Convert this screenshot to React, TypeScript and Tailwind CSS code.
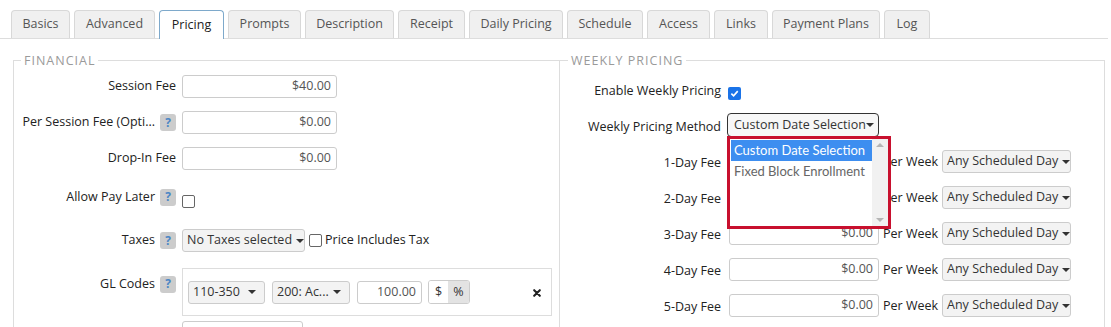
import React from 'react';

const tabs = [
  { name: 'Basics', w: 'w-[59px]' },
  { name: 'Advanced', w: 'w-[81px]' },
  { name: 'Pricing', w: 'w-[65px]', active: true },
  { name: 'Prompts', w: 'w-[73px]' },
  { name: 'Description', w: 'w-[89px]' },
  { name: 'Receipt', w: 'w-[67px]' },
  { name: 'Daily Pricing', w: 'w-[94px]' },
  { name: 'Schedule', w: 'w-[76px]' },
  { name: 'Access', w: 'w-[63px]' },
  { name: 'Links', w: 'w-[54px]' },
  { name: 'Payment Plans', w: 'w-[108px]' },
  { name: 'Log', w: 'w-[46px]' },
];

function Caret() {
  return (
    <span className="inline-block shrink-0 w-0 h-0 border-x-[4px] border-x-transparent border-t-[4px] border-t-[#333]" />
  );
}

function Help() {
  return (
    <span className="inline-flex items-center justify-center w-[16px] h-[17px] rounded-[3px] bg-[#cccccc] text-[#4a86c5] text-[12px] font-bold leading-none ml-[5px]">
      ?
    </span>
  );
}

function MoneyInput({ value, w = 'w-[155px]' }: { value?: string; w?: string }) {
  return (
    <div
      className={`${w} h-[23px] border border-[#cccccc] rounded-[3px] bg-white flex items-center justify-end pr-[5px] text-[#555] text-[12.5px]`}
    >
      {value}
    </div>
  );
}

function SelectBtn({ text, w, pr = 'pr-[4px]' }: { text: string; w: string; pr?: string }) {
  return (
    <div
      className={`${w} ${pr} h-[23px] border border-[#cccccc] rounded-[3px] bg-[#f3f3f3] flex items-center justify-between gap-[4px] pl-[4px] text-[#333] text-[12.5px] whitespace-nowrap overflow-hidden`}
    >
      <span>{text}</span>
      <Caret />
    </div>
  );
}

function Checkbox() {
  return <span className="inline-block w-[13px] h-[13px] border border-[#666] rounded-[2px] bg-white" />;
}

function LeftRow({
  label,
  help,
  children,
  className = '',
}: {
  label: string;
  help?: boolean;
  children: React.ReactNode;
  className?: string;
}) {
  return (
    <div className={`flex ${className}`}>
      <div className="w-[162px] flex items-center justify-end text-[#222] text-[12.5px] whitespace-nowrap">
        {label}
        {help && <Help />}
      </div>
      <div className="ml-[6px] flex items-center">{children}</div>
    </div>
  );
}

function FeeRow({ day, hidden }: { day: number; hidden?: boolean }) {
  return (
    <div className="flex items-center h-[23px]">
      <div className="w-[161px] text-right text-[#222] text-[12.5px] pt-[3px]">{day}-Day Fee</div>
      <div className="ml-[8px]">
        <MoneyInput value={hidden ? undefined : '$0.00'} w="w-[150px]" />
      </div>
      <span className="ml-[4px] text-[#222] text-[12.5px] pt-[2px] whitespace-nowrap">Per Week</span>
      <div className="ml-[4px]">
        <SelectBtn text="Any Scheduled Day" w="w-[129px]" />
      </div>
    </div>
  );
}

export default function App() {
  return (
    <div className="w-[1111px] h-[327px] overflow-hidden bg-white font-['Open_Sans',sans-serif]">
      {/* Tabs */}
      <div className="w-[1108px] h-[39px] pt-[10px] pl-[11px] flex gap-[4px] border-b border-[#dddddd]">
        {tabs.map((t) => (
          <div
            key={t.name}
            className={`${t.w} flex items-center justify-center rounded-t-[4px] border border-b-0 text-[12.5px] ${
              t.active
                ? 'h-[29px] bg-white border-[#7ea9cb] text-[#222]'
                : 'h-[28px] bg-[#f0f0f0] border-[#d8d8d8] text-[#555]'
            }`}
          >
            {t.name}
          </div>
        ))}
      </div>

      <div className="flex pl-[13px] mt-[15px]">
        {/* Financial */}
        <fieldset className="w-[547px] h-[300px] border-l border-t border-r border-[#dddddd]">
          <legend className="ml-[7px] px-[3px] text-[12.5px] leading-[13px] tracking-[1px] text-[#9a9a9a]">
            FINANCIAL
          </legend>
          <div className="pt-[8px] flex flex-col">
            <LeftRow label="Session Fee">
              <MoneyInput value="$40.00" />
            </LeftRow>
            <LeftRow label="Per Session Fee (Opti..." help className="mt-[13px]">
              <MoneyInput value="$0.00" />
            </LeftRow>
            <LeftRow label="Drop-In Fee" className="mt-[13px]">
              <MoneyInput value="$0.00" />
            </LeftRow>
            <LeftRow label="Allow Pay Later" help className="mt-[18px] h-[18px]">
              <span className="mt-[9px]">
                <Checkbox />
              </span>
            </LeftRow>
            <LeftRow label="Taxes" help className="mt-[22px]">
              <SelectBtn text="No Taxes selected" w="w-[123px]" pr="pr-[6px]" />
              <span className="ml-[4px] mt-[1px]">
                <Checkbox />
              </span>
              <span className="ml-[3px] text-[#222] text-[12.5px]">Price Includes Tax</span>
            </LeftRow>
            <div className="flex mt-[15px]">
              <div className="w-[162px] flex justify-end pt-[5px] text-[#222] text-[12.5px] h-[22px] items-center box-content">
                GL Codes
                <Help />
              </div>
              <div className="ml-[6px] w-[370px] h-[48px] border border-[#dddddd] flex items-center pl-[5px] pr-[10px]">
                <SelectBtn text="110-350" w="w-[77px]" pr="pr-[8px]" />
                <div className="ml-[7px]">
                  <SelectBtn text="200: Ac..." w="w-[78px]" pr="pr-[8px]" />
                </div>
                <div className="ml-[7px]">
                  <MoneyInput value="100.00" w="w-[65px]" />
                </div>
                <div className="ml-[6px] flex h-[24px] border border-[#cccccc] rounded-[3px] overflow-hidden text-[12.5px] text-[#333]">
                  <span className="w-[19px] flex items-center justify-center bg-white">$</span>
                  <span className="w-[21px] flex items-center justify-center bg-[#e3e3e3]">%</span>
                </div>
                <svg className="ml-auto mt-[2px]" width="8" height="8" viewBox="0 0 10 10">
                  <path d="M1.5 1.5 L8.5 8.5 M8.5 1.5 L1.5 8.5" stroke="#222" strokeWidth="2.6" strokeLinecap="round" />
                </svg>
              </div>
            </div>
            <div className="ml-[168px] mt-[5px] w-[121px] h-[23px] border border-[#cccccc] rounded-[3px]" />
          </div>
        </fieldset>

        {/* Weekly pricing */}
        <fieldset className="w-[545px] h-[300px] border-t border-r border-[#dddddd]">
          <legend className="ml-[8px] px-[3px] text-[12.5px] leading-[13px] tracking-[1px] text-[#9a9a9a]">
            WEEKLY PRICING
          </legend>
          <div className="pt-[15px] flex flex-col">
            <div className="flex items-center h-[18px]">
              <div className="w-[161px] text-right text-[#222] text-[12.5px]">Enable Weekly Pricing</div>
              <span className="ml-[7px] mt-[5px] w-[13px] h-[13px] rounded-[2px] bg-[#1a73e8] flex items-center justify-center">
                <svg width="9" height="9" viewBox="0 0 10 10">
                  <path d="M1.5 5.2 L4 7.6 L8.6 2.4" fill="none" stroke="#fff" strokeWidth="1.8" />
                </svg>
              </span>
            </div>
            <div className="flex items-center mt-[13px] h-[24px]">
              <div className="w-[161px] text-right text-[#222] text-[12.5px] pt-[5px]">Weekly Pricing Method</div>
              <div className="ml-[6px] relative">
                <div className="w-[152px] h-[24px] border border-[#333] rounded-[4px] bg-[#f7f7f7] flex items-center justify-between pl-[6px] pr-[5px] text-[#333] text-[12.5px] whitespace-nowrap">
                  <span>Custom Date Selection</span>
                  <Caret />
                </div>
                <div className="absolute left-0 top-[23px] w-[164px] h-[93px] border-[3px] border-[#c8102e] bg-white z-10 flex font-['Lato',sans-serif] text-[13px]">
                  <div className="flex-1 pt-[1px] pl-[1px]">
                    <div className="h-[21px] bg-[#3d8ef0] text-white flex items-center pl-[3px] whitespace-nowrap">
                      Custom Date Selection
                    </div>
                    <div className="h-[22px] text-[#666] flex items-center pl-[3px] whitespace-nowrap">
                      Fixed Block Enrollment
                    </div>
                  </div>
                  <div className="w-[16px] bg-[#f1f1f1] flex flex-col items-center justify-between py-[4px]">
                    <span className="w-0 h-0 border-x-[4px] border-x-transparent border-b-[4px] border-b-[#b5b5b5]" />
                    <span className="w-0 h-0 border-x-[4px] border-x-transparent border-t-[4px] border-t-[#b5b5b5]" />
                  </div>
                </div>
              </div>
            </div>
            <div className="flex flex-col gap-[13px] mt-[13px]">
              {[1, 2, 3, 4, 5].map((d) => (
                <FeeRow key={d} day={d} hidden={d < 3} />
              ))}
            </div>
          </div>
        </fieldset>
      </div>
    </div>
  );
}
